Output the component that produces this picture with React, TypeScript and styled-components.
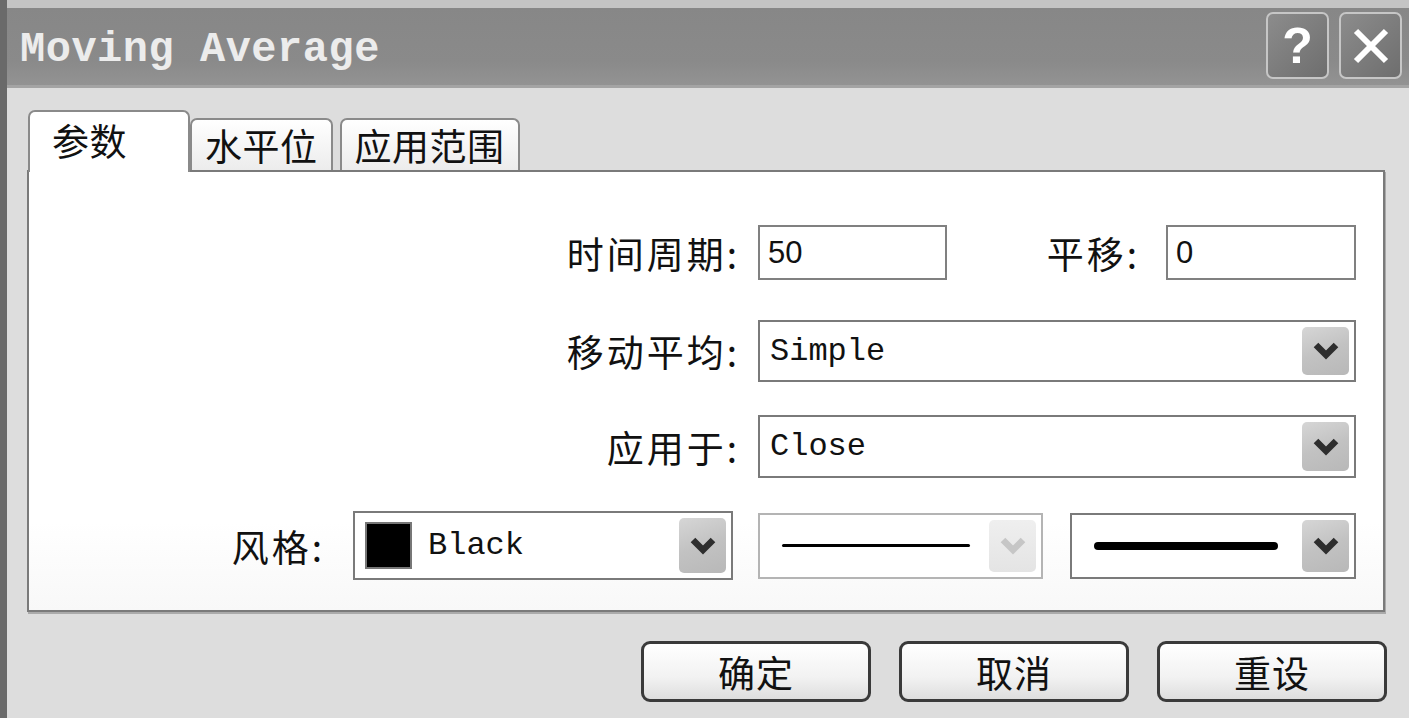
import React from 'react'
import styled, { createGlobalStyle } from 'styled-components'

const Global = createGlobalStyle`
  html, body {
    margin: 0;
    padding: 0;
    background: #dddddd;
    overflow: hidden;
  }
`

const cjk = `"Noto Sans CJK SC", "Noto Sans", sans-serif`
const mono = `"Liberation Mono", "Courier New", monospace`

const Frame = styled.div`
  width: 1409px;
  height: 718px;
  box-sizing: border-box;
  border-left: 7px solid #6a6a6a;
  background: #dddddd;
  display: flex;
  flex-direction: column;
  overflow: hidden;
`

const TitleBar = styled.div`
  height: 88px;
  box-sizing: border-box;
  border-top: 8px solid #c4c4c4;
  border-bottom: 3px solid #a4a4a4;
  background: linear-gradient(#878787 0%, #8a8a8a 70%, #939393 100%);
  display: flex;
  align-items: center;
  padding: 0 7px 0 13px;
`

const Title = styled.div`
  flex: 1;
  font-family: ${mono};
  font-weight: 700;
  font-size: 42px;
  color: #ececec;
  letter-spacing: 0.5px;
  margin-top: 6px;
`

const CapButton = styled.div`
  width: 63px;
  height: 67px;
  box-sizing: border-box;
  margin-left: 10px;
  margin-top: -2px;
  border: 2px solid #c6c6c6;
  border-radius: 7px;
  background: linear-gradient(135deg, #8c8c8c, #6e6e6e);
  display: flex;
  align-items: center;
  justify-content: center;
  color: #ffffff;
  font-family: "Liberation Sans", Arial, sans-serif;
  font-weight: 700;
  font-size: 50px;
`

const Body = styled.div`
  flex: 1;
  display: flex;
  flex-direction: column;
  padding: 22px 24px 0 20px;
`

const TabRow = styled.div`
  display: flex;
  align-items: flex-end;
  height: 60px;
  padding-left: 1px;
  position: relative;
  z-index: 1;
`

const Tab = styled.div<{ $active?: boolean; $gap?: number }>`
  box-sizing: border-box;
  height: ${p => (p.$active ? 62 : 52)}px;
  margin-bottom: ${p => (p.$active ? -2 : 0)}px;
  margin-left: ${p => p.$gap ?? 0}px;
  padding: ${p => (p.$active ? '8px 22px 0' : '5px 13px 0')};
  border: 2px solid #8a8a8a;
  border-bottom: none;
  border-radius: 7px 7px 0 0;
  background: ${p => (p.$active ? '#ffffff' : 'linear-gradient(#ffffff, #ececec)')};
  font-family: ${cjk};
  font-size: 37px;
  line-height: 40px;
  letter-spacing: 0.5px;
  color: #111;
  width: ${p => (p.$active ? '162px' : 'auto')};
`

const Panel = styled.div`
  width: 1358px;
  height: 442px;
  box-sizing: border-box;
  border: 2px solid #7a7a7a;
  box-shadow: 1px 2px 0 #aaaaaa;
  background: linear-gradient(#ffffff 80%, #f8f8f8);
  padding: 53px 27px 0 0;
  display: flex;
  flex-direction: column;
`

const Row = styled.div<{ $mt?: number }>`
  display: flex;
  align-items: center;
  justify-content: flex-end;
  margin-top: ${p => p.$mt ?? 0}px;
`

const Label = styled.div<{ $gap: number; $w?: number }>`
  font-family: ${cjk};
  font-size: 37px;
  letter-spacing: 3px;
  color: #111;
  margin-right: ${p => p.$gap}px;
  ${p => (p.$w ? `width: ${p.$w}px; text-align: right;` : '')}
`

const Input = styled.div<{ $w: number }>`
  width: ${p => p.$w}px;
  height: 55px;
  box-sizing: border-box;
  border: 2px solid #808080;
  background: #fff;
  padding-left: 8px;
  display: flex;
  align-items: center;
  font-family: "Liberation Sans", Arial, sans-serif;
  font-size: 31px;
  color: #111;
`

const Combo = styled.div<{ $w: number; $h: number; $disabled?: boolean; $ml?: number }>`
  width: ${p => p.$w}px;
  height: ${p => p.$h}px;
  margin-left: ${p => p.$ml ?? 0}px;
  box-sizing: border-box;
  border: 2px solid ${p => (p.$disabled ? '#b4b4b4' : '#7a7a7a')};
  background: #fff;
  display: flex;
  align-items: center;
  padding: 0 5px 0 10px;
`

const ComboValue = styled.div`
  flex: 1;
  display: flex;
  align-items: center;
  gap: 16px;
  font-family: ${mono};
  font-size: 32px;
  color: #111;
`

const Swatch = styled.div`
  width: 47px;
  height: 47px;
  box-sizing: border-box;
  border: 2px solid #777;
  background: #000;
`

const Line = styled.div<{ $w: number; $t: number }>`
  width: ${p => p.$w}px;
  height: ${p => p.$t}px;
  background: #000;
  border-radius: ${p => p.$t / 2}px;
  margin-left: 12px;
`

const Arrow = styled.div<{ $h: number; $disabled?: boolean }>`
  width: 47px;
  height: ${p => p.$h}px;
  box-sizing: border-box;
  border-radius: 5px;
  background: ${p =>
    p.$disabled
      ? 'linear-gradient(#efefef, #e4e4e4)'
      : 'linear-gradient(160deg, #d6d6d6, #c2c2c2 50%, #b8b8b8)'};
  display: flex;
  align-items: center;
  justify-content: center;
`

const Footer = styled.div`
  display: flex;
  justify-content: flex-end;
  gap: 28px;
  margin: 29px -2px 0 0;
`

const Button = styled.div`
  width: 230px;
  height: 61px;
  box-sizing: border-box;
  border: 3px solid #3a3a3a;
  border-radius: 9px;
  background: linear-gradient(#ffffff, #f2f2f2 60%, #dedede);
  display: flex;
  align-items: center;
  justify-content: center;
  font-family: ${cjk};
  font-size: 37px;
  letter-spacing: 1px;
  color: #111;
`

const Chevron: React.FC<{ color: string }> = ({ color }) => (
  <svg width="28" height="20" viewBox="0 0 28 20">
    <polyline points="4,4 14,14 24,4" fill="none" stroke={color} strokeWidth="6.5" />
  </svg>
)

const Select: React.FC<{
  w: number
  h: number
  disabled?: boolean
  ml?: number
  children: React.ReactNode
}> = ({ w, h, disabled, ml, children }) => (
  <Combo $w={w} $h={h} $disabled={disabled} $ml={ml}>
    <ComboValue>{children}</ComboValue>
    <Arrow $h={h - 14} $disabled={disabled}>
      <Chevron color={disabled ? '#c6c6c6' : '#2e2e2e'} />
    </Arrow>
  </Combo>
)

const App: React.FC = () => {
  return (
    <Frame>
      <Global />
      <TitleBar>
        <Title>Moving Average</Title>
        <CapButton>?</CapButton>
        <CapButton>
          <svg width="40" height="40" viewBox="0 0 40 40">
            <path d="M5 5 L35 35 M35 5 L5 35" stroke="#fff" strokeWidth="6" />
          </svg>
        </CapButton>
      </TitleBar>
      <Body>
        <TabRow>
          <Tab $active>参数</Tab>
          <Tab>水平位</Tab>
          <Tab $gap={7}>应用范围</Tab>
        </TabRow>
        <Panel>
          <Row>
            <Label $gap={18}>时间周期:</Label>
            <Input $w={189}>50</Input>
            <Label $gap={26} $w={193}>平移:</Label>
            <Input $w={190}>0</Input>
          </Row>
          <Row $mt={40}>
            <Label $gap={18}>移动平均:</Label>
            <Select w={598} h={62}>Simple</Select>
          </Row>
          <Row $mt={33}>
            <Label $gap={18}>应用于:</Label>
            <Select w={598} h={63}>Close</Select>
          </Row>
          <Row $mt={33}>
            <Label $gap={28}>风格:</Label>
            <Select w={380} h={69}>
              <Swatch />
              Black
            </Select>
            <Select w={285} h={66} ml={25} disabled>
              <Line $w={188} $t={3} />
            </Select>
            <Select w={286} h={66} ml={27}>
              <Line $w={184} $t={8} />
            </Select>
          </Row>
        </Panel>
        <Footer>
          <Button>确定</Button>
          <Button>取消</Button>
          <Button>重设</Button>
        </Footer>
      </Body>
    </Frame>
  )
}

export default App
